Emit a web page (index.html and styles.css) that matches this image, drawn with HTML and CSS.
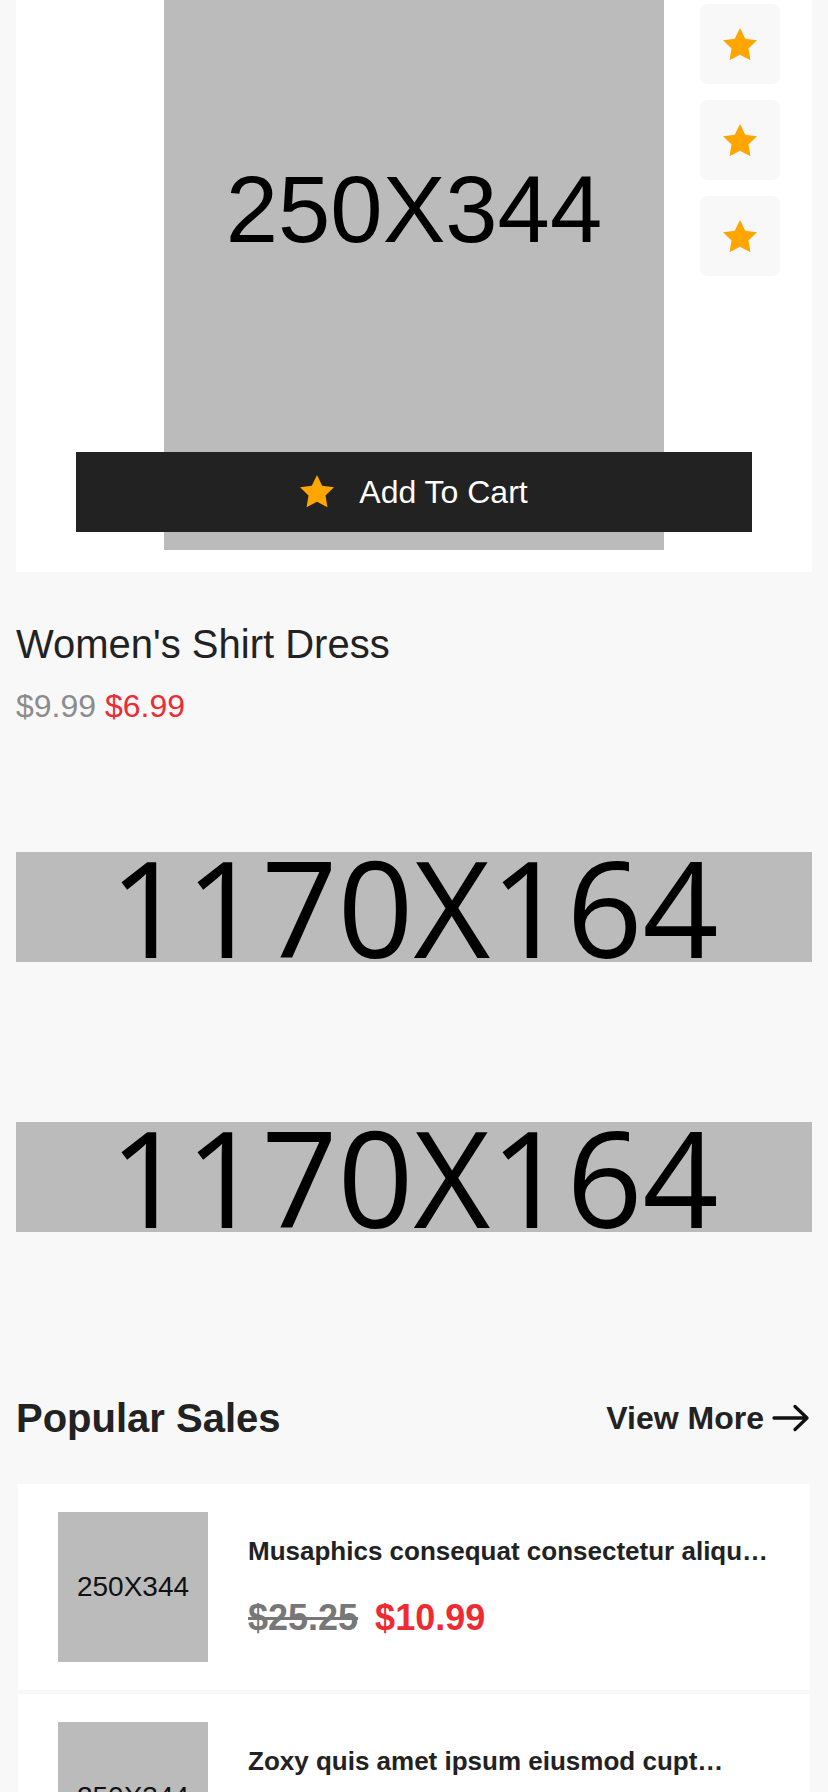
FILE: index.html
```html
<!DOCTYPE html>
<html lang="en">
<head>
<meta charset="utf-8">
<title>Women's Shirt Dress</title>
<link rel="stylesheet" href="styles.css">
</head>
<body>
<div class="page">
  <section class="hero">
    <div class="hero-img">250X344</div>
    <div class="side-actions">
      <button class="side-btn" type="button"><svg class="star" viewBox="2 2 20 19.02"><path d="M12 2l3.09 6.26L22 9.27l-5 4.87 1.18 6.88L12 17.77l-6.18 3.25L7 14.14 2 9.27l6.91-1.01L12 2z"/></svg></button>
      <button class="side-btn" type="button"><svg class="star" viewBox="2 2 20 19.02"><path d="M12 2l3.09 6.26L22 9.27l-5 4.87 1.18 6.88L12 17.77l-6.18 3.25L7 14.14 2 9.27l6.91-1.01L12 2z"/></svg></button>
      <button class="side-btn" type="button"><svg class="star" viewBox="2 2 20 19.02"><path d="M12 2l3.09 6.26L22 9.27l-5 4.87 1.18 6.88L12 17.77l-6.18 3.25L7 14.14 2 9.27l6.91-1.01L12 2z"/></svg></button>
    </div>
    <button class="cart-btn" type="button"><svg class="star" viewBox="2 2 20 19.02"><path d="M12 2l3.09 6.26L22 9.27l-5 4.87 1.18 6.88L12 17.77l-6.18 3.25L7 14.14 2 9.27l6.91-1.01L12 2z"/></svg><span>Add To Cart</span></button>
  </section>

  <section class="product-info">
    <h1 class="product-title">Women's Shirt Dress</h1>
    <div class="product-price"><span class="old">$9.99</span> <span class="new">$6.99</span></div>
  </section>

  <div class="banner banner-first">1170X164</div>
  <div class="banner banner-second">1170X164</div>

  <section class="popular">
    <div class="section-head">
      <h2 class="section-title">Popular Sales</h2>
      <a class="view-more" href="#">View More<svg class="arrow" viewBox="0 0 40 28"><path d="M2 14H35M23 2.5L35 14L23 25.5"/></svg></a>
    </div>
    <div class="list">
      <div class="card">
        <div class="thumb">250X344</div>
        <div class="info">
          <div class="item-title">Musaphics consequat consectetur aliqu…</div>
          <div class="item-prices"><span class="item-old">$25.25</span><span class="item-new">$10.99</span></div>
        </div>
      </div>
      <div class="card">
        <div class="thumb">250X344</div>
        <div class="info">
          <div class="item-title">Zoxy quis amet ipsum eiusmod cupt…</div>
          <div class="item-prices"><span class="item-old">$18.50</span><span class="item-new">$12.99</span></div>
        </div>
      </div>
    </div>
  </section>
</div>
</body>
</html>
```
FILE: styles.css
```css
html, body {
  margin: 0;
  padding: 0;
}
body {
  background: #f8f8f8;
  font-family: "Liberation Sans", Arial, sans-serif;
  color: #222;
  height: 1792px;
  overflow: hidden;
}
.page {
  padding: 0 16px;
}

/* hero */
.hero {
  position: relative;
  background: #fff;
  height: 572px;
  display: flex;
  justify-content: center;
}
.hero-img {
  width: 500px;
  height: 550px;
  box-sizing: border-box;
  background: #bbbbbb;
  color: #000;
  text-align: center;
  font-size: 94px;
  line-height: 94px;
  padding-top: 163px;
}
.star {
  width: 34px;
  height: 32.3px;
  fill: #ffa500;
  display: block;
}
.side-actions {
  position: absolute;
  top: 4px;
  right: 32px;
  display: flex;
  flex-direction: column;
  gap: 16px;
}
.side-btn {
  width: 80px;
  height: 80px;
  border: 0;
  padding: 0;
  border-radius: 8px;
  background: #f8f8f8;
  display: flex;
  align-items: center;
  justify-content: center;
}
.cart-btn {
  position: absolute;
  top: 452px;
  left: 60px;
  right: 60px;
  height: 80px;
  border: 0;
  padding: 0;
  background: #222;
  color: #fff;
  display: flex;
  align-items: center;
  justify-content: center;
  gap: 25px;
  font-family: "Liberation Sans", Arial, sans-serif;
  font-size: 32px;
}
.cart-btn .star {
  margin-top: -2px;
}

/* product info */
.product-info {
  margin-top: 49px;
}
.product-title {
  margin: 0;
  font-size: 40px;
  line-height: 46px;
  font-weight: 400;
  color: #222;
}
.product-price {
  margin-top: 21px;
  font-size: 32px;
  line-height: 36px;
}
.product-price .old {
  color: #8c8c8c;
}
.product-price .new {
  color: #ee2a33;
}

/* banners */
.banner {
  height: 110px;
  box-sizing: border-box;
  padding-bottom: 8px;
  background: #bbbbbb;
  color: #000;
  font-family: "Open Sans", "Noto Sans", sans-serif;
  font-size: 133px;
  line-height: 110px;
  text-align: center;
  overflow: visible;
  white-space: nowrap;
}
.banner-first {
  margin-top: 128px;
}
.banner-second {
  margin-top: 160px;
}

/* popular */
.popular {
  margin-top: 163px;
}
.section-head {
  display: flex;
  justify-content: space-between;
  align-items: center;
}
.section-title {
  margin: 0;
  font-size: 40px;
  line-height: 46px;
  font-weight: 700;
  color: #222;
}
.view-more {
  display: flex;
  align-items: center;
  color: #222;
  text-decoration: none;
  font-size: 32px;
  line-height: 37px;
  font-weight: 700;
}
.arrow {
  width: 40px;
  height: 28px;
  margin-left: 8px;
  fill: none;
  stroke: #111;
  stroke-width: 3.3;
  stroke-linecap: round;
  stroke-linejoin: round;
}
.list {
  margin-top: 43px;
  display: flex;
  flex-direction: column;
  gap: 4px;
}
.card {
  margin: 0 2px;
  background: #fff;
  padding: 28px 40px;
  display: flex;
  align-items: center;
  gap: 40px;
}
.thumb {
  flex: 0 0 150px;
  width: 150px;
  height: 150px;
  background: #bbbbbb;
  color: #111;
  font-size: 28px;
  display: flex;
  align-items: center;
  justify-content: center;
}
.info {
  flex: 1;
  min-width: 0;
}
.item-title {
  font-size: 26px;
  line-height: 30px;
  font-weight: 700;
  color: #222;
  white-space: nowrap;
  overflow: hidden;
  text-overflow: ellipsis;
}
.item-prices {
  margin-top: 32px;
  font-size: 36px;
  line-height: 40px;
  font-weight: 700;
}
.item-old {
  color: #777;
  text-decoration: line-through;
  margin-right: 17px;
}
.item-new {
  color: #ee2a33;
}
```
